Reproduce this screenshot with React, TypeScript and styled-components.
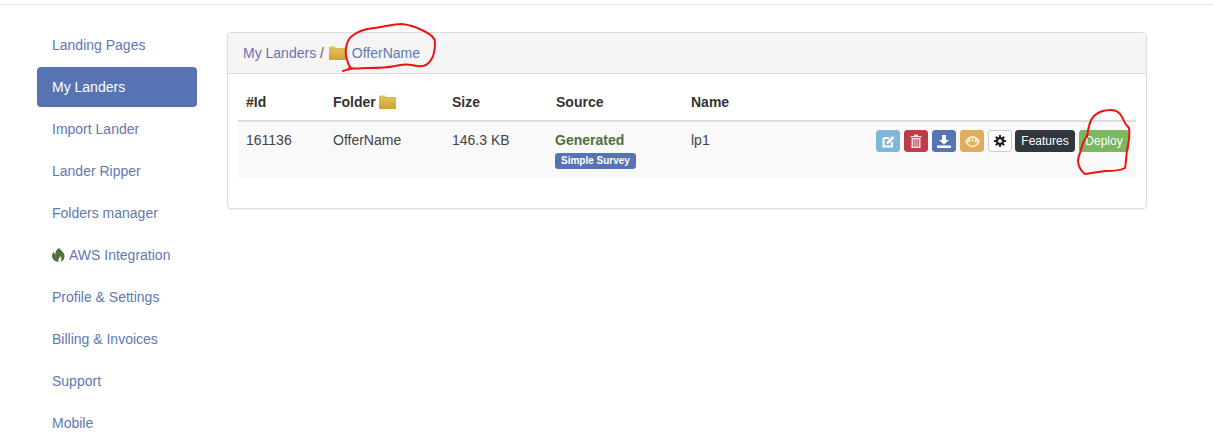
import React from "react";
import styled, { createGlobalStyle } from "styled-components";

const Global = createGlobalStyle`
  html, body { margin: 0; height: 439px; overflow: hidden; background: #fff; }
  body { font-family: "Liberation Sans", Arial, sans-serif; font-size: 14px; line-height: 20px; color: #333; }
`;

const TopBar = styled.div`height: 4px; border-bottom: 1px solid #e7e7e7;`;
const Layout = styled.div`display: flex; gap: 30px; padding: 20px 0 0 37px;`;
const Sidebar = styled.nav`width: 160px; flex: none; display: flex; flex-direction: column; gap: 2px;`;
const NavItem = styled.a<{ $active?: boolean }>`
  display: flex; align-items: center; gap: 4px; height: 40px; padding: 0 15px; border-radius: 4px;
  color: ${(p) => (p.$active ? "#fff" : "#5f78b4")};
  background: ${(p) => (p.$active ? "#5674b4" : "transparent")};
`;
const Main = styled.main`width: 920px; padding-top: 7px;`;
const Panel = styled.section`border: 1px solid #ddd; border-radius: 4px; box-shadow: 0 1px 1px rgba(0,0,0,.05); background: #fff;`;
const PanelHeading = styled.div`
  height: 40px; padding: 0 15px; background: #f5f5f5; border-bottom: 1px solid #ddd;
  border-radius: 3px 3px 0 0; display: flex; align-items: center; white-space: pre; color: #555;
`;
const Crumb = styled.a`color: #6d70b0;`;
const CrumbLast = styled(Crumb)`color: #5f78b4; margin-left: 6px;`;
const CrumbFolder = styled.span`display: inline-flex; margin-left: 1px;`;
const PanelBody = styled.div`padding: 10px 10px 30px;`;
const Table = styled.table`width: 100%; border-collapse: collapse; table-layout: fixed;`;
const Th = styled.th<{ $w?: number }>`
  width: ${(p) => (p.$w ? `${p.$w}px` : "auto")};
  text-align: left; padding: 8px; border-bottom: 2px solid #ddd; font-weight: 700; height: 20px;
  vertical-align: bottom; white-space: nowrap; color: #333;
`;
const Row = styled.tr`background: #f9f9f9;`;
const Td = styled.td`padding: 8px; vertical-align: top; height: 40px; box-sizing: content-box; color: #444;`;
const ActionsCell = styled(Td)`padding-right: 7px;`;
const Generated = styled.div`font-weight: 700; color: #4f6f42; margin-left: -1px;`;
const Badge = styled.span`
  display: inline-block; margin: 3px 0 0 -1px; height: 16px; line-height: 16px; padding: 0 6px; border-radius: 3px;
  background: #5674b4; color: #fff; font-size: 10px; font-weight: 700; vertical-align: top;
`;
const Actions = styled.div`display: flex; justify-content: flex-end;`;
const Btn = styled.button<{ $bg: string; $fg?: string; $border?: string; $w: number; $ml?: number }>`
  width: ${(p) => p.$w}px; height: 22px; margin-left: ${(p) => p.$ml ?? 4}px; padding: 0;
  display: flex; align-items: center; justify-content: center;
  border: 1px solid ${(p) => p.$border ?? p.$bg}; border-radius: 3px; background: ${(p) => p.$bg};
  color: ${(p) => p.$fg ?? "#fff"}; font: 12px/18px "Liberation Sans", Arial, sans-serif;
`;
const Overlay = styled.svg`position: absolute; left: 0; top: 0; pointer-events: none;`;
const FolderSvg = styled.svg`display: inline-block; flex: none;`;
const ThInner = styled.span`display: inline-flex; align-items: center; gap: 3px;`;

const Folder = ({ id }: { id: string }) => (
  <FolderSvg width="17" height="14" viewBox="0 0 17 14">
    <defs>
      <linearGradient id={id} x1="0" y1="0" x2="0" y2="1">
        <stop offset="0" stopColor="#e9c65c" />
        <stop offset="1" stopColor="#cfa036" />
      </linearGradient>
    </defs>
    <path d="M0 1.5 L0.5 0.5 H6 L7 2 H16.5 L17 3 V14 H0 Z" fill={`url(#${id})`} />
    <path d="M0 2.5 H17 V3 H0 Z" fill="#a9873a" opacity=".35" />
  </FolderSvg>
);

const Flame = () => (
  <svg width="13" height="14" viewBox="0 0 13 14">
    <path
      fill="#4f7240"
      fillRule="evenodd"
      d="M7 0 C8 2 10.5 3 11.8 5.5 C13.3 8.5 12.5 12.5 8.5 14 C10 12 9.5 9.5 8 8 C8 9.5 7 10.5 6.5 11.5 C6 12.5 6.2 13.3 6.8 14 C3 13.6 0 11.5 0 8 C0 6 1 4.5 2.2 3.5 C2 5 2.5 6 3.5 6.5 C3 4 4.5 1.5 7 0 Z"
    />
  </svg>
);

const EditIcon = () => (
  <svg width="13" height="13" viewBox="0 0 13 13">
    <path d="M1.5 3 H7 M1.5 3 V11.5 H10 V7" fill="none" stroke="#fff" strokeWidth="2" />
    <path d="M4.5 9 L5 6.5 L10.5 1 L12.5 3 L7 8.5 Z" fill="#fff" />
  </svg>
);

const TrashIcon = () => (
  <svg width="12" height="14" viewBox="0 0 12 14" fill="#f6dfe2">
    <path d="M0.5 2 H4 V0.5 H8 V2 H11.5 V3.3 H0.5 Z" />
    <path fillRule="evenodd" d="M1.5 4 H10.5 V14 H1.5 Z M3.2 5.2 V12.8 H4.4 V5.2 Z M5.4 5.2 V12.8 H6.6 V5.2 Z M7.6 5.2 V12.8 H8.8 V5.2 Z" />
  </svg>
);

const DownloadIcon = () => (
  <svg width="14" height="13" viewBox="0 0 14 13" fill="#fff">
    <path d="M5 0 H9 V5 H12 L7 9.5 L2 5 H5 Z" />
    <path d="M0 10.5 H14 V13 H0 Z" />
  </svg>
);

const EyeIcon = () => (
  <svg width="15" height="11" viewBox="0 0 15 11">
    <path d="M0 5.5 C2 1.5 5 0 7.5 0 C10 0 13 1.5 15 5.5 C13 9.5 10 11 7.5 11 C5 11 2 9.5 0 5.5 Z" fill="#f8ecd2" />
    <path d="M2 4.5 C4 7.5 11 7.5 13 4.5 C12 8.5 9.5 9.6 7.5 9.6 C5.5 9.6 3 8.5 2 4.5 Z" fill="#deae58" />
    <circle cx="7.5" cy="4.5" r="2.6" fill="#deae58" />
    <circle cx="7.5" cy="4.2" r="1.2" fill="#f8ecd2" />
  </svg>
);

const GearIcon = () => (
  <svg width="12" height="12" viewBox="0 0 13 13">
    <g fill="#222">
      <circle cx="6.5" cy="6.5" r="4.4" />
      <rect x="5.4" y="0" width="2.2" height="13" rx=".4" />
      <rect x="0" y="5.4" width="13" height="2.2" rx=".4" />
      <rect x="5.4" y="0" width="2.2" height="13" rx=".4" transform="rotate(45 6.5 6.5)" />
      <rect x="5.4" y="0" width="2.2" height="13" rx=".4" transform="rotate(-45 6.5 6.5)" />
    </g>
    <circle cx="6.5" cy="6.5" r="2" fill="#fff" />
  </svg>
);

const navItems = ["Landing Pages", "My Landers", "Import Lander", "Lander Ripper", "Folders manager", "AWS Integration", "Profile & Settings", "Billing & Invoices", "Support", "Mobile"];

export default function App() {
  return (
    <>
      <Global />
      <TopBar />
      <Layout>
        <Sidebar>
          {navItems.map((n) => (
            <NavItem key={n} $active={n === "My Landers"}>
              {n === "AWS Integration" && <Flame />}
              {n}
            </NavItem>
          ))}
        </Sidebar>
        <Main>
          <Panel>
            <PanelHeading>
              <Crumb>My Landers</Crumb> / <CrumbFolder><Folder id="f1" /></CrumbFolder>
              <CrumbLast>OfferName</CrumbLast>
            </PanelHeading>
            <PanelBody>
              <Table>
                <thead>
                  <tr>
                    <Th $w={71}>#Id</Th>
                    <Th $w={103}><ThInner>Folder <Folder id="f2" /></ThInner></Th>
                    <Th $w={88}>Size</Th>
                    <Th $w={119}>Source</Th>
                    <Th>Name</Th>
                    <Th $w={260} />
                  </tr>
                </thead>
                <tbody>
                  <Row>
                    <Td>161136</Td>
                    <Td>OfferName</Td>
                    <Td>146.3 KB</Td>
                    <Td>
                      <Generated>Generated</Generated>
                      <Badge>Simple Survey</Badge>
                    </Td>
                    <Td>lp1</Td>
                    <ActionsCell>
                      <Actions>
                        <Btn $bg="#7fb6d9" $w={24} aria-label="Edit"><EditIcon /></Btn>
                        <Btn $bg="#bb3e4d" $w={24} aria-label="Delete"><TrashIcon /></Btn>
                        <Btn $bg="#5674b4" $w={24} aria-label="Download"><DownloadIcon /></Btn>
                        <Btn $bg="#deae58" $w={24} aria-label="Preview"><EyeIcon /></Btn>
                        <Btn $bg="#fff" $fg="#333" $border="#ccc" $w={24} aria-label="Settings"><GearIcon /></Btn>
                        <Btn $bg="#32363f" $w={60} $ml={3}>Features</Btn>
                        <Btn $bg="#7bb661" $w={50}>Deploy</Btn>
                      </Actions>
                    </ActionsCell>
                  </Row>
                </tbody>
              </Table>
            </PanelBody>
          </Panel>
        </Main>
      </Layout>
      <Overlay width="1213" height="439" viewBox="0 0 1213 439" fill="none" stroke="#f01010" strokeWidth="2" strokeLinecap="round" strokeLinejoin="round">
        <path d="M343 71 C346 70 349 69 351 69 C347 62 345 54 346 48 C347 42 349 38 352 36 C358 31 365 29 374 28 C384 27 392 24 402 24 C411 25 418 28 424 31 C430 34 435 37 435 42 C435 50 434 56 431 60 C428 65 423 67 417 66 C410 64 402 64 395 66 C386 68 376 68 368 68 C362 68 354 69 349 68" />
        <path d="M1087 137 C1088 128 1090 120 1094 116 C1098 112 1105 110 1111 110 C1116 110 1120 113 1122 117 C1124 122 1127 126 1129 128 C1130 134 1129 142 1127 150 C1126 158 1126 164 1125 168 C1120 171 1112 171 1105 171 C1098 172 1091 173 1085 174 C1081 171 1078 166 1078 160 C1079 154 1082 148 1083 143 C1084 140 1086 138 1087 135" />
      </Overlay>
    </>
  );
}
